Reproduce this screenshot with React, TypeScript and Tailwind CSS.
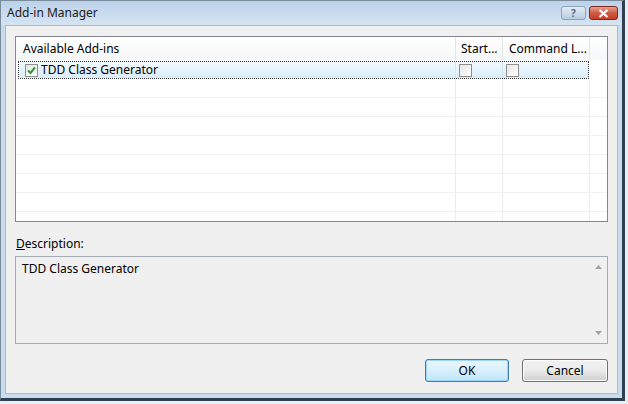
import { Fragment } from "react";

const font = { fontFamily: '"Noto Sans", "Open Sans", sans-serif' };

function CheckBox({ checked }: { checked?: boolean }) {
  return (
    <div className="w-[13px] h-[13px] border border-[#8f8f8f] bg-gradient-to-br from-[#e6e6e6] to-white flex items-center justify-center">
      {checked && (
        <svg width="11" height="11" viewBox="0 0 11 11">
          <path
            d="M2 5.5L4.5 8L9 2.5"
            fill="none"
            stroke="#2f9a32"
            strokeWidth="2"
          />
        </svg>
      )}
    </div>
  );
}

function GridRow() {
  return (
    <div className="flex shrink-0 h-[19px] border-b border-[#f0f0f0]">
      <div className="w-[440px] border-r border-[#ececec]" />
      <div className="w-[47px] border-r border-[#ececec]" />
      <div className="w-[87px] border-r border-[#ececec]" />
      <div className="flex-1" />
    </div>
  );
}

export default function App() {
  return (
    <div className="w-[628px] h-[404px] bg-[#e9eef3] text-[12px] text-black" style={font}>
      <div className="w-[625px] h-[401px] flex flex-col bg-[#c9dbee] border-l border-t border-[#7a8b9c] border-r-[3px] border-b-[3px] border-r-[#2e3f50] border-b-[#2e3f50]">
        {/* title bar */}
        <div className="h-[24px] flex items-center pl-[6px] pr-[4px] bg-gradient-to-b from-[#bcd2ea] to-[#d6e4f2]">
          <span className="text-[12px] text-[#1b1b1b]">Add-in Manager</span>
          <div className="ml-auto flex gap-[3px] items-center">
            <div className="w-[25px] h-[14px] rounded-[3px] border border-[#8aa2bb] bg-gradient-to-b from-[#e4edf6] to-[#b8cce0] flex items-center justify-center text-[10px] font-bold text-[#55677a] leading-none">
              ?
            </div>
            <div className="w-[29px] h-[14px] rounded-[3px] border border-[#7a2a20] bg-gradient-to-b from-[#e8a08e] via-[#cf5a44] to-[#c43e26] flex items-center justify-center">
              <svg width="11" height="9" viewBox="0 0 11 9">
                <path d="M1.5 1L9.5 8M9.5 1L1.5 8" stroke="white" strokeWidth="2.2" />
              </svg>
            </div>
          </div>
        </div>

        {/* client area */}
        <div className="flex-1 mx-[4px] mb-[4px] bg-[#f0f0f0] border border-[#a9bccf] flex flex-col pl-[9px] pr-[9px] pt-[10px]">
          {/* list view */}
          <div className="h-[186px] shrink-0 border border-[#828790] bg-white flex flex-col overflow-hidden">
            <div className="flex shrink-0 h-[23px] bg-gradient-to-b from-white to-[#f6f7f8] items-center">
              <div className="w-[440px] h-full border-r border-[#e5e5e5] pl-[7px] pt-[1px] flex items-center">Available Add-ins</div>
              <div className="w-[47px] h-full border-r border-[#e5e5e5] pl-[5px] pt-[1px] flex items-center">Start...</div>
              <div className="w-[87px] h-full border-r border-[#e5e5e5] pl-[6px] pt-[1px] flex items-center">Command L...</div>
              <div className="flex-1" />
            </div>
            <div className="h-[1px] shrink-0" />
            {/* selected row */}
            <div className="flex shrink-0 h-[18px]">
              <div className="w-[571px] ml-[2px] border border-dotted border-[#3a3a3a] bg-gradient-to-b from-[#f2f9fe] to-[#d9ecfa] flex">
                <div className="w-[437px] border-r border-[#d5e3ee] flex items-center pl-[6px] gap-[3px]">
                  <CheckBox checked />
                  <span>TDD Class Generator</span>
                </div>
                <div className="w-[47px] border-r border-[#d5e3ee] flex items-center pl-[3px]">
                  <CheckBox />
                </div>
                <div className="flex-1 flex items-center pl-[3px]">
                  <CheckBox />
                </div>
              </div>
            </div>
            {Array.from({ length: 9 }).map((_, i) => (
              <Fragment key={i}>
                <GridRow />
              </Fragment>
            ))}
          </div>

          {/* description */}
          <div className="mt-[15px] ml-[1px] leading-[14px]">
            <span className="underline">D</span>escription:
          </div>
          <div className="mt-[5px] h-[88px] shrink-0 border border-[#a5acb5] bg-[#f0f0f0] flex">
            <div className="flex-1 pl-[6px] pt-[3px]">TDD Class Generator</div>
            <div className="w-[17px] flex flex-col items-center justify-between py-[8px]">
              <svg width="7" height="4" viewBox="0 0 7 4">
                <path d="M0 4L3.5 0L7 4Z" fill="#a0a0a0" />
              </svg>
              <svg width="7" height="4" viewBox="0 0 7 4">
                <path d="M0 0L3.5 4L7 0Z" fill="#a0a0a0" />
              </svg>
            </div>
          </div>

          {/* buttons */}
          <div className="mt-[15px] flex justify-end gap-[13px]">
            <button className="w-[84px] h-[23px] rounded-[3px] border border-[#3c7fb1] bg-gradient-to-b from-[#eaf6fd] via-[#d9f0fc] to-[#bee6fd] shadow-[inset_0_0_0_1px_#9fd5f5]">
              OK
            </button>
            <button className="w-[86px] h-[23px] rounded-[3px] border border-[#707070] bg-gradient-to-b from-[#f2f2f2] via-[#ebebeb] to-[#cfcfcf] shadow-[inset_0_0_0_1px_#fcfcfc]">
              Cancel
            </button>
          </div>
        </div>
      </div>
    </div>
  );
}
